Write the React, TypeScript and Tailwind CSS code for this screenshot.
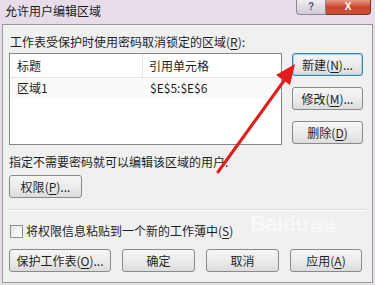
import React from 'react';

const FONT = { fontFamily: '"Noto Sans CJK SC", "Noto Sans", sans-serif' };

function Key({ k }: { k: string }) {
    return <span>(<span className="underline underline-offset-2">{k}</span>)</span>;
}

function Btn({ children, w, focus }: { children: React.ReactNode; w: string; focus?: boolean }) {
    return (
        <div
            className={`${w} h-[23px] flex items-center justify-center rounded-[3px] border text-[12px] text-[#1e1e1e] bg-gradient-to-b from-[#f6f6f6] via-[#ececec] to-[#dcdcdc] ${focus ? 'border-[#3c7fb1] shadow-[inset_0_0_0_1px_#9fd3f2]' : 'border-[#8a8a8a]'}`}
        >
            {children}
        </div>
    );
}

export default function App() {
    return (
        <div className="relative w-[375px] h-[285px] overflow-hidden bg-[#e6dde8]" style={FONT}>
            {/* title bar */}
            <div className="flex h-[24px]">
                <div className="pl-[5px] pt-[2px] text-[12px] leading-[18px] text-[#1a1a1a]">允许用户编辑区域</div>
                <div className="ml-auto mr-[4px] flex h-[15px]">
                    <div className="w-[30px] flex items-center justify-center rounded-bl-[4px] border border-t-0 border-[#8d8791] bg-gradient-to-b from-[#f1eef3] to-[#cfc9d4] text-[10px] leading-[12px] font-bold text-[#5a5566]" style={{ fontFamily: '"Liberation Sans", sans-serif' }}>?</div>
                    <div className="w-[45px] flex items-center justify-center rounded-br-[4px] border border-l-0 border-t-0 border-[#7a3328] bg-gradient-to-b from-[#e69a86] via-[#c9442e] to-[#c8523b] text-[10px] leading-[12px] font-bold text-white" style={{ fontFamily: '"Liberation Sans", sans-serif' }}>X</div>
                </div>
            </div>

            {/* dialog body */}
            <div className="mx-[2px] h-[259px] border border-[#9a9a9a] bg-[#f0f0f0] pl-[6px] pr-[8px] text-[12px] leading-[16px] text-[#1e1e1e]">
                <div className="mt-[9px] pl-[1px]">工作表受保护时使用密码取消锁定的区域<Key k="R" />:</div>

                <div className="mt-[3px] flex gap-[10px]">
                    <div className="w-[273px] h-[92px] border border-[#828790] bg-white">
                        <div className="flex h-[24px] border-b border-[#e3e3e3]">
                            <div className="w-[133px] border-r border-[#e3e3e3] pl-[7px] flex items-center">标题</div>
                            <div className="pl-[6px] flex items-center">引用单元格</div>
                        </div>
                        <div className="flex h-[20px] items-center bg-[#fafafa]">
                            <div className="w-[133px] pl-[7px]">区域1</div>
                            <div className="pl-[7px]">$E$5:$E$6</div>
                        </div>
                    </div>
                    <div className="flex flex-col gap-[11px]">
                        <Btn w="w-[71px]" focus>新建<Key k="N" />...</Btn>
                        <Btn w="w-[71px]">修改<Key k="M" />...</Btn>
                        <Btn w="w-[71px]">删除<Key k="D" /></Btn>
                    </div>
                </div>

                <div className="mt-[9px]">指定不需要密码就可以编辑该区域的用户:</div>
                <div className="mt-[5px]">
                    <Btn w="w-[73px]">权限<Key k="P" />...</Btn>
                </div>

                <div className="mt-[11px] h-px bg-[#dadada] border-b border-white box-content w-[356px]" />

                <div className="mt-[12px] flex items-center gap-[3px]">
                    <div className="ml-[1px] w-[13px] h-[13px] border border-[#8e8f8f] bg-gradient-to-br from-[#e6e6e6] to-white" />
                    <div>将权限信息粘贴到一个新的工作薄中<Key k="S" /></div>
                </div>

                <div className="mt-[10px] flex gap-[11px]">
                    <Btn w="w-[102px]">保护工作表<Key k="O" />...</Btn>
                    <Btn w="w-[73px]">确定</Btn>
                    <Btn w="w-[73px]">取消</Btn>
                    <Btn w="w-[72px]">应用<Key k="A" /></Btn>
                </div>
            </div>

            {/* watermark */}
            <div className="absolute left-[250px] top-[213px] text-[22px] font-bold leading-none text-white/60 tracking-tight" style={{ fontFamily: '"Liberation Sans", sans-serif' }}>
                Bai<span className="text-white/50">du</span><span className="text-[13px] ml-[2px]" style={FONT}>经验</span>
            </div>

            {/* red arrow */}
            <svg className="absolute left-0 top-0" width="375" height="285" viewBox="0 0 375 285">
                <line x1="218" y1="172" x2="286" y2="78" stroke="#e01e1e" strokeWidth="3" strokeLinecap="round" />
                <polygon points="295,64 276,75 290,85" fill="#e01e1e" />
            </svg>
        </div>
    );
}
